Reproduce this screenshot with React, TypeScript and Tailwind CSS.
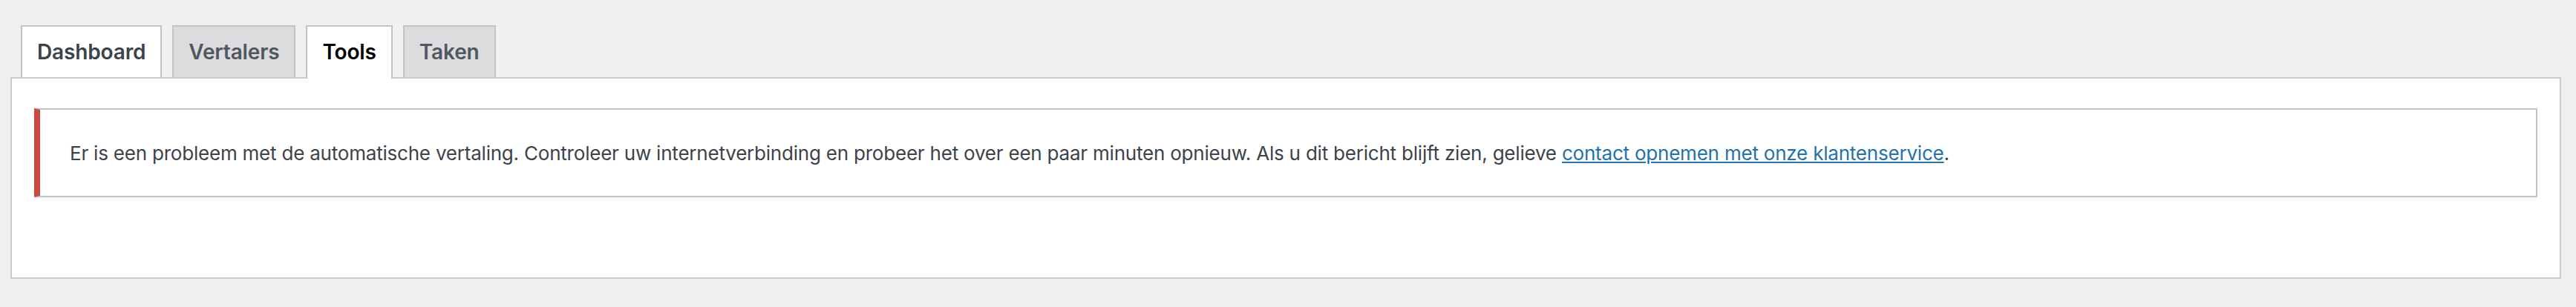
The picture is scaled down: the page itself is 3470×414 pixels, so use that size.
export default function App() {
  const tabs = [
    { label: 'Dashboard', state: 'light' },
    { label: 'Vertalers', state: 'idle' },
    { label: 'Tools', state: 'active' },
    { label: 'Taken', state: 'idle' },
  ];

  return (
    <div className="min-h-[414px] bg-[#f0f0f1] pl-[14px] pr-[20px] pt-[34px] font-['Inter','Noto_Sans',sans-serif]">
      {/* Tabs */}
      <div className="flex items-end gap-[14px] pl-[14px]">
        {tabs.map((t) =>
          t.state === 'active' ? (
            <div
              key={t.label}
              className="relative z-10 -mb-[2px] h-[72px] border-2 border-b-0 border-[#c3c4c7] bg-white px-[20px] pt-[10px] text-[28px] font-semibold leading-[48px] tracking-[-0.15px] text-black"
            >
              {t.label}
            </div>
          ) : (
            <div
              key={t.label}
              className={
                t.state === 'light'
                  ? 'h-[70px] border-2 border-b-0 border-[#c3c4c7] bg-white px-[20px] pt-[10px] text-[28px] font-semibold leading-[48px] tracking-[-0.15px] text-[#3c434a]'
                  : 'h-[70px] border-2 border-b-0 border-[#c3c4c7] bg-[#dcdcde] px-[20px] pt-[10px] text-[28px] font-semibold leading-[48px] tracking-[-0.15px] text-[#50575e]'
              }
            >
              {t.label}
            </div>
          )
        )}
      </div>

      {/* Panel */}
      <div className="h-[272px] border-2 border-[#cccccc] bg-white px-[30px] pt-[40px]">
        <div className="flex h-[120px] items-center border-2 border-l-[8px] border-[#c3c4c7] border-l-[#ca4a40] bg-white pl-[40px] shadow-[0_2px_2px_rgba(0,0,0,0.04)]">
          <p className="text-[26px] leading-[39px] tracking-[-0.21px] text-[#3c434a]">
            Er is een probleem met de automatische vertaling. Controleer uw internetverbinding en probeer het over een paar minuten opnieuw. Als u dit bericht blijft zien, gelieve{' '}
            <a href="#" className="text-[#2271b1] underline">
              contact opnemen met onze klantenservice
            </a>
            .
          </p>
        </div>
      </div>
    </div>
  );
}
